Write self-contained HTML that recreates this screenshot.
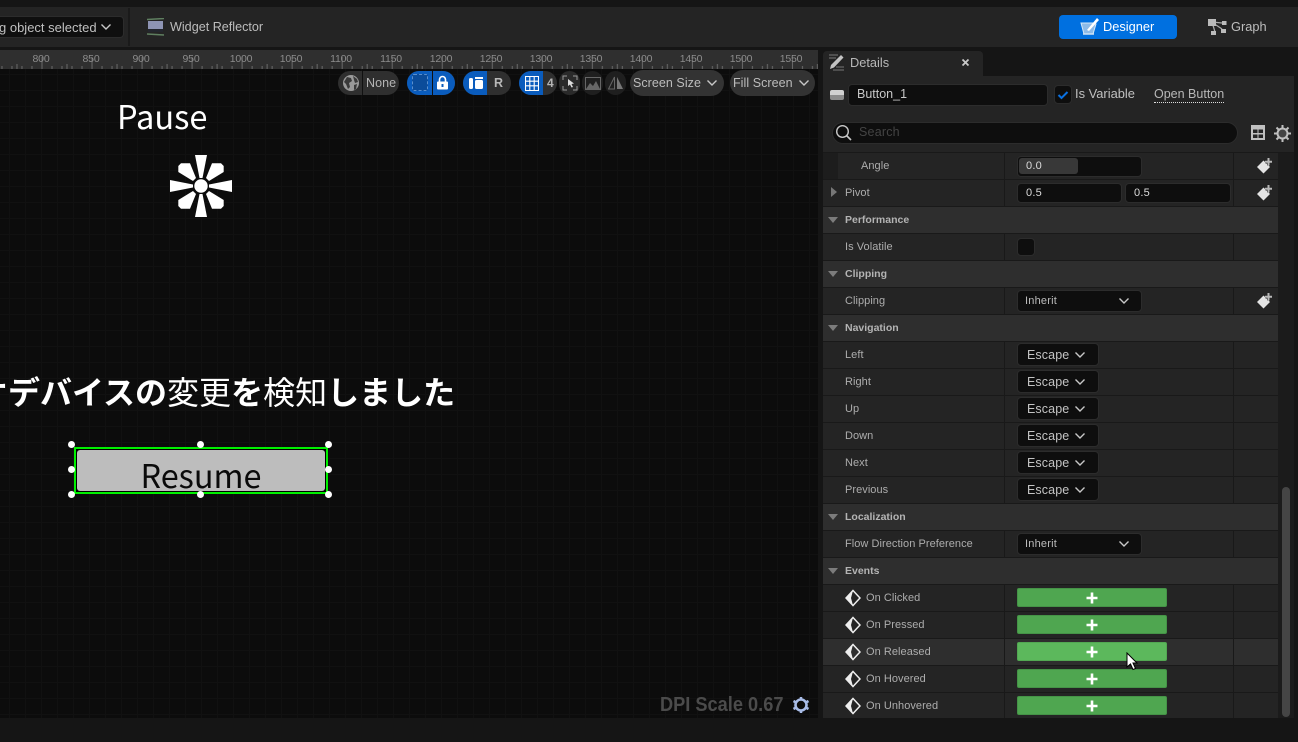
<!DOCTYPE html>
<html><head><meta charset="utf-8"><style>
*{box-sizing:border-box}
html,body{margin:0;padding:0;width:1298px;height:742px;overflow:hidden;background:#151515;font-family:"Liberation Sans","Noto Sans CJK JP",sans-serif;}
div,span,svg{position:absolute}
span.i{position:static}
.t{white-space:nowrap;line-height:1}
.row{left:823px;width:455px;height:27px;background:#242424;border-bottom:1px solid #191919}
.hd{background:#2e2e2e}
.hov{background:#2e2e2e}
.row .c1{left:181px;top:0;width:1px;height:26px;background:#191919}
.row .c2{left:410px;top:0;width:1px;height:26px;background:#191919}
.hd .c1,.hd .c2{display:none}
.lb{left:22px;top:8px;font-size:11px;color:#adadad;letter-spacing:.05px;white-space:nowrap;line-height:11px}
.hl{left:22px;top:7px;font-size:10.5px;font-weight:bold;color:#b4b4b4;white-space:nowrap;line-height:12px;top:7px}
.tri{left:5px;top:10px;width:0;height:0;border-left:5.5px solid transparent;border-right:5.5px solid transparent;border-top:6px solid #7c7c7c}
.inp{background:#0e0e0e;border:1px solid #2c2c2c;border-radius:4px}
.v{font-size:11px;color:#dcdcdc;line-height:11px;white-space:nowrap;letter-spacing:.2px}
.esc{left:194px;top:2px;width:82px;height:23px;background:#0e0e0e;border:1px solid #2c2c2c;border-radius:4px}
.esc .v{left:9px;top:5px;font-size:12.5px;line-height:13px;color:#c4c4c4;letter-spacing:.1px}
.esc svg{left:56px;top:7px}
.gb{left:194px;top:3px;width:150px;height:19px;background:#4fa650;border:1px solid #459347;border-radius:2px}
.gb svg{left:68px;top:3px}
.pill{background:#2f2f2f;top:71px;height:24px;border-radius:12px;overflow:hidden}
.blue{background:#0a5cbd;top:0;height:24px}
.pt{font-size:12.5px;color:#b4b4b4;line-height:13px;white-space:nowrap;letter-spacing:.05px}
.h{width:7px;height:7px;border-radius:50%;background:#fff}
.rl{font-size:10.5px;color:#8c8c8c;top:54px;line-height:10px;letter-spacing:-.2px;transform:translateX(-50%)}
</style></head><body>

<!-- top toolbar -->
<div style="left:0;top:7px;width:1298px;height:40px;background:#242424"></div>
<div style="left:-20px;top:16px;width:144px;height:22px;background:#0f0f0f;border:1px solid #2c2c2c;border-radius:4px"></div>
<div class="t" style="left:-1px;top:21px;font-size:13px;color:#c0c0c0">g object selected</div>
<svg style="left:100px;top:23px" width="12" height="8"><path d="M1.5 1.5L6 6l4.500-4.500" fill="none" stroke="#c8c8c8" stroke-width="1.400"/></svg>
<div style="left:128px;top:8px;width:2px;height:38px;background:#1a1a1a"></div>
<svg style="left:146px;top:18px" width="20" height="18"><path d="M1 1.500L18 0.500M1 16L18 17" stroke="#5f7f60" stroke-width="1.500"/><rect x="2" y="3" width="15" height="10" fill="#8e94b4"/><rect x="2" y="11" width="15" height="3" fill="#23262e"/></svg>
<div class="t" style="left:170px;top:21px;font-size:12.6px;color:#bdbdbd">Widget Reflector</div>

<div style="left:1059px;top:15px;width:118px;height:24px;background:#0070e0;border-radius:4px"></div>
<svg style="left:1079px;top:16px" width="21" height="21"><path d="M2 7h13l2 1-3 10H5z" fill="#8dbbe8" stroke="#d5e8f8" stroke-width="1"/><path d="M8 14L18 2l2 2L10 15z" fill="#fff"/><path d="M4 18h11" stroke="#cfe3f6" stroke-width="1.500"/></svg>
<div class="t" style="left:1103px;top:21px;font-size:12.8px;color:#fff">Designer</div>
<svg style="left:1208px;top:18px" width="19" height="18"><path d="M4 4l10 1M4 4l3 10M5 5l9 6" stroke="#aaa" stroke-width="1.300" fill="none"/><rect x="0" y="1" width="8" height="7" fill="#bbb"/><rect x="14" y="3" width="4.500" height="4" fill="#bbb"/><rect x="3" y="13" width="5" height="4" fill="#bbb"/><rect x="13" y="11" width="5" height="4" fill="#bbb"/></svg>
<div class="t" style="left:1231px;top:21px;font-size:12.8px;color:#bdbdbd">Graph</div>

<!-- ruler -->
<div style="left:0;top:50px;width:818px;height:19px;background:#2f2f2f"></div>
<svg style="left:0;top:50px" width="818" height="19">
<defs><pattern id="r" x="41.500" y="0" width="50.030" height="19" patternUnits="userSpaceOnUse">
<path d="M.5 7V19M10.500 16V19M20.500 16V19M25.500 14V19M30.500 16V19M40.500 16V19" stroke="#6a6a6a" stroke-width="1"/></pattern></defs>
<rect width="818" height="19" fill="url(#r)"/></svg>
<div class="t rl" style="left:41px">800</div><div class="t rl" style="left:91px">850</div><div class="t rl" style="left:141px">900</div><div class="t rl" style="left:191px">950</div><div class="t rl" style="left:241px">1000</div><div class="t rl" style="left:291px">1050</div><div class="t rl" style="left:341px">1100</div><div class="t rl" style="left:391px">1150</div><div class="t rl" style="left:441px">1200</div><div class="t rl" style="left:491px">1250</div><div class="t rl" style="left:541px">1300</div><div class="t rl" style="left:591px">1350</div><div class="t rl" style="left:641px">1400</div><div class="t rl" style="left:691px">1450</div><div class="t rl" style="left:741px">1500</div><div class="t rl" style="left:791px">1550</div>

<!-- canvas -->
<div style="left:0;top:69px;width:818px;height:649px;background-color:#0c0c0c;background-image:linear-gradient(to right,#111 1px,transparent 1px),linear-gradient(to bottom,#111 1px,transparent 1px);background-size:16px 16px;background-position:9px 5px"></div>

<!-- viewport toolbar -->
<div class="pill" style="left:338px;width:61px"><div style="left:24px;top:0;width:1px;height:24px;background:#111"></div><div class="pt" style="left:28px;top:6px">None</div></div>
<svg style="left:342px;top:74px" width="18" height="18"><circle cx="9" cy="9" r="8" fill="#9a9a9a"/><path d="M5 3l4 1 1 3-3 2 1 4-2 2-2-5-2-2zM11 2l4 3 1 3-3 1-1-3zM12 11l3-1-1 5-2 1z" fill="#3a3a3a"/></svg>
<div class="pill" style="left:407px;width:48px"><div class="blue" style="left:0;width:48px"></div><div style="left:25px;top:0;width:1px;height:24px;background:#111"></div></div>
<div style="left:412px;top:74px;width:16px;height:17px;background:#0b4c9a;border:1px dashed #5a8fcd;border-radius:2px"></div>
<svg style="left:436px;top:75px" width="13" height="15"><path d="M3.500 7V4.500a3 3 0 0 1 6 0V7" fill="none" stroke="#fff" stroke-width="1.600"/><rect x="1" y="6.500" width="11" height="8" rx="1" fill="#fff"/><rect x="5.500" y="9" width="2" height="3" fill="#0a5cbd"/></svg>
<div class="pill" style="left:463px;width:48px"><div class="blue" style="left:0;width:24px"></div></div>
<svg style="left:469px;top:77px" width="15" height="13"><rect x="0" y="1" width="4" height="11" rx="1.500" fill="#fff"/><rect x="6" y="3" width="8" height="9" rx="1.500" fill="#fff"/><rect x="6" y="0" width="8" height="2" fill="#fff"/></svg>
<div class="t" style="left:494px;top:77px;font-size:12.500px;font-weight:bold;color:#b8b8b8">R</div>
<div class="pill" style="left:519px;width:38px"><div class="blue" style="left:0;width:24px"></div><div class="pt" style="left:28px;top:6px;font-weight:bold;font-size:12px">4</div></div>
<svg style="left:525px;top:76px" width="14" height="15"><path d="M.5.5h13v14H.5zM.5 5.200h13M.5 9.800h13M4.800.5v14M9.200.5v14" fill="none" stroke="#fff" stroke-width="1.100"/></svg>
<div class="pill" style="left:559px;width:21px;background:#2a2a2a"></div>
<svg style="left:562px;top:75px" width="16" height="16"><path d="M1 5V1h4M11 1h4v4M15 11v4h-4M5 15H1v-4" fill="none" stroke="#999" stroke-width="1"/><path d="M6 4l6 4.500-2.500.5 1.500 3-1.500.5-1.500-3L6 11z" fill="#ddd"/></svg>
<div class="pill" style="left:582px;width:21px;background:#1f1f1f"></div>
<svg style="left:585px;top:77px" width="16" height="13"><rect x=".5" y=".5" width="15" height="12" fill="none" stroke="#666"/><path d="M1 12l4-6 3 3 3-5 4 8z" fill="#666"/></svg>
<div class="pill" style="left:605px;width:21px;background:#1f1f1f"></div>
<svg style="left:608px;top:76px" width="16" height="14"><path d="M6.500 1v12H.5z" fill="none" stroke="#666"/><path d="M9 1v12h6z" fill="#777"/></svg>
<div class="pill" style="left:630px;top:70px;width:94px;height:26px;border-radius:13px;background:#333"></div>
<div class="pt" style="left:633px;top:77px;color:#bcbcbc">Screen Size</div>
<svg style="left:706px;top:79px" width="12" height="8"><path d="M1.500 1.500L6 6l4.500-4.500" fill="none" stroke="#c8c8c8" stroke-width="1.400"/></svg>
<div class="pill" style="left:730px;top:70px;width:85px;height:26px;border-radius:13px;background:#333"></div>
<div class="pt" style="left:733px;top:77px;color:#bcbcbc">Fill Screen</div>
<svg style="left:798px;top:79px" width="12" height="8"><path d="M1.500 1.500L6 6l4.500-4.500" fill="none" stroke="#c8c8c8" stroke-width="1.400"/></svg>

<!-- canvas content -->
<div class="t" style="left:117px;top:95px;font-size:32.600px;line-height:42px;color:#fff;font-family:'Noto Sans CJK JP',sans-serif;font-weight:400">Pause</div>
<svg style="left:165px;top:150px" width="72" height="72"><g fill="#fff" transform="translate(36 36)"><circle r="6.700"/><path d="M-6-31H6L1.500-8H-1.500Z"/><path transform="rotate(90)" d="M-6-31H6L1.500-8H-1.500Z"/><path transform="rotate(180)" d="M-6-31H6L1.500-8H-1.500Z"/><path transform="rotate(270)" d="M-6-31H6L1.500-8H-1.500Z"/>
<path d="M-22.700-20L-20-22.700H-11L-5-8-8-5-22.700-14Z"/><path transform="scale(-1 1)" d="M-22.700-20L-20-22.700H-11L-5-8-8-5-22.700-14Z"/><path transform="scale(1 -1)" d="M-22.700-20L-20-22.700H-11L-5-8-8-5-22.700-14Z"/><path transform="scale(-1 -1)" d="M-22.700-20L-20-22.700H-11L-5-8-8-5-22.700-14Z"/></g></svg>
<div class="t" style="left:-24px;top:372px;font-size:32px;line-height:38px;color:#fff;font-weight:700;font-family:'Noto Sans CJK JP',sans-serif">オデバイスの<span class="i" style="font-weight:400">変更</span>を<span class="i" style="font-weight:400">検知</span>しました</div>

<div style="left:74px;top:447px;width:254px;height:47px;border:2px solid #00f000;background:#000"></div>
<div style="left:77px;top:450px;width:248px;height:41px;background:#bdbdbd;border-radius:3px;overflow:hidden"><div class="t" style="left:0;width:248px;text-align:center;top:3px;font-size:32.400px;line-height:44px;color:#0a0a0a;font-family:'Noto Sans CJK JP',sans-serif;font-weight:400">Resume</div></div>
<div class="h" style="left:68px;top:441px"></div><div class="h" style="left:197px;top:441px"></div><div class="h" style="left:325px;top:441px"></div>
<div class="h" style="left:68px;top:466px"></div><div class="h" style="left:325px;top:466px"></div>
<div class="h" style="left:68px;top:491px"></div><div class="h" style="left:197px;top:491px"></div><div class="h" style="left:325px;top:491px"></div>

<div class="t" style="left:660px;top:694px;font-size:20px;line-height:22px;font-weight:bold;color:#4b4b4b;transform:scaleX(.91);transform-origin:0 0">DPI Scale 0.67</div>
<svg style="left:792px;top:696px" width="18" height="18"><circle cx="9" cy="9" r="5.500" fill="none" stroke="#a9bde8" stroke-width="2.600"/><path d="M9 1v3M9 14v3M1.500 5l2.600 1.500M13.900 11.500l2.600 1.500M1.500 13l2.600-1.500M13.900 6.500L16.500 5" stroke="#a9bde8" stroke-width="2.500"/></svg>

<!-- details panel -->
<div style="left:823px;top:51px;width:160px;height:25px;background:#242424;border-radius:4px 4px 0 0"></div>
<div style="left:823px;top:76px;width:471px;height:642px;background:#242424"></div>
<div style="left:1278px;top:153px;width:16px;height:565px;background:#1b1b1b"></div>
<svg style="left:828px;top:54px" width="17" height="17"><path d="M1 1h9M1 4h7M8 13h8M5 16h11" stroke="#777" stroke-width="1"/><path d="M3 11L13 1l2.500 2.500L6 13.500 2 15z" fill="#c4c4c4"/></svg>
<div class="t" style="left:850px;top:57px;font-size:12.800px;color:#b8b8b8">Details</div>
<svg style="left:961px;top:58px" width="9" height="9"><path d="M1.500 1.500l6 6M7.500 1.500l-6 6" stroke="#c8c8c8" stroke-width="1.800"/></svg>

<div style="left:830px;top:90px;width:14px;height:10px;border-radius:2px;background:linear-gradient(to bottom,#d0d0d0 0,#d0d0d0 50%,#8c8c8c 50%)"></div>
<div class="inp" style="left:848px;top:84px;width:200px;height:22px"></div>
<div class="t" style="left:857px;top:88px;font-size:12.500px;color:#c8c8c8">Button_1</div>
<div class="inp" style="left:1054px;top:85px;width:18px;height:19px"></div>
<svg style="left:1057px;top:90px" width="12" height="10"><path d="M1.500 5l3 3 6-6" fill="none" stroke="#0a70e0" stroke-width="2"/></svg>
<div class="t" style="left:1075px;top:88px;font-size:12.900px;color:#c0c0c0">Is Variable</div>
<div class="t" style="left:1154px;top:88px;font-size:12.500px;color:#b8b8b8;border-bottom:1px dotted #ddd;padding-bottom:1px">Open Button</div>

<div style="left:832px;top:122px;width:406px;height:22px;background:#0e0e0e;border:1px solid #2c2c2c;border-radius:11px"></div>
<svg style="left:835px;top:124px" width="18" height="18"><circle cx="7.500" cy="7.500" r="5.800" fill="none" stroke="#c8c8c8" stroke-width="1.400"/><path d="M11.500 11.500L16 16" stroke="#c8c8c8" stroke-width="1.600"/></svg>
<div class="t" style="left:859px;top:126px;font-size:12.500px;color:#444;letter-spacing:.2px">Search</div>
<svg style="left:1251px;top:125px" width="14" height="15"><rect x="0" y="0" width="14" height="15" fill="#c0c0c0"/><path d="M2 4.500h4.500v3.500H2zM7.500 4.500H12v3.500H7.500zM2 9.500h4.500V13H2zM7.500 9.500H12V13H7.500z" fill="#242424"/></svg>
<svg style="left:1274px;top:125px" width="17" height="17"><circle cx="8.500" cy="8.500" r="5" fill="#444" stroke="#c0c0c0" stroke-width="2"/><path d="M8.500 0v3M8.500 14v3M0 8.500h3M14 8.500h3M2.500 2.500l2 2M12.500 12.500l2 2M2.500 14.500l2-2M12.500 4.500l2-2" stroke="#c0c0c0" stroke-width="2"/></svg>
<div style="left:823px;top:152px;width:471px;height:1px;background:#191919"></div>
<div style="left:1282px;top:487px;width:8px;height:230px;background:#454545;border-radius:4px"></div>

<!-- rows -->
<div class="row" style="top:153px"><div style="left:0;top:0;width:15px;height:26px;background:#1d1d1d"></div><div class="c1"></div><div class="c2"></div><div class="lb" style="left:38px">Angle</div>
<div class="inp" style="left:194px;top:3px;width:125px;height:21px"></div><div style="left:196px;top:5px;width:59px;height:16px;background:#383838;border-radius:3px"></div><div class="v" style="left:203px;top:8px">0.0</div></div>
<div class="row" style="top:180px"><div class="c1"></div><div class="c2"></div><div style="left:8px;top:7px;width:0;height:0;border-top:5px solid transparent;border-bottom:5px solid transparent;border-left:6px solid #777"></div><div class="lb">Pivot</div>
<div class="inp" style="left:194px;top:3px;width:105px;height:20px"></div><div class="v" style="left:203px;top:8px">0.5</div>
<div class="inp" style="left:302px;top:3px;width:106px;height:20px"></div><div class="v" style="left:311px;top:8px">0.5</div></div>
<div class="row hd" style="top:207px"><div class="tri"></div><div class="hl">Performance</div></div>
<div class="row" style="top:234px"><div class="c1"></div><div class="c2"></div><div class="lb">Is Volatile</div><div class="inp" style="left:194px;top:4px;width:18px;height:18px"></div></div>
<div class="row hd" style="top:261px"><div class="tri"></div><div class="hl">Clipping</div></div>
<div class="row" style="top:288px"><div class="c1"></div><div class="c2"></div><div class="lb">Clipping</div><div class="inp" style="left:194px;top:2px;width:125px;height:22px"></div><div class="v" style="left:202px;top:8px;color:#bcbcbc">Inherit</div>
<svg style="left:295px;top:9px" width="12" height="8"><path d="M1.500 1.500L6 6l4.500-4.500" fill="none" stroke="#c8c8c8" stroke-width="1.400"/></svg></div>
<div class="row hd" style="top:315px"><div class="tri"></div><div class="hl">Navigation</div></div>
<div class="row" style="top:342px"><div class="c1"></div><div class="c2"></div><div class="lb">Left</div><div class="esc" style="top:1px"><div class="v">Escape</div><svg width="12" height="8"><path d="M1.500 1.500L6 6l4.500-4.500" fill="none" stroke="#c8c8c8" stroke-width="1.400"/></svg></div></div>
<div class="row" style="top:369px"><div class="c1"></div><div class="c2"></div><div class="lb">Right</div><div class="esc" style="top:1px"><div class="v">Escape</div><svg width="12" height="8"><path d="M1.500 1.500L6 6l4.500-4.500" fill="none" stroke="#c8c8c8" stroke-width="1.400"/></svg></div></div>
<div class="row" style="top:396px"><div class="c1"></div><div class="c2"></div><div class="lb">Up</div><div class="esc" style="top:1px"><div class="v">Escape</div><svg width="12" height="8"><path d="M1.500 1.500L6 6l4.500-4.500" fill="none" stroke="#c8c8c8" stroke-width="1.400"/></svg></div></div>
<div class="row" style="top:423px"><div class="c1"></div><div class="c2"></div><div class="lb">Down</div><div class="esc" style="top:1px"><div class="v">Escape</div><svg width="12" height="8"><path d="M1.500 1.500L6 6l4.500-4.500" fill="none" stroke="#c8c8c8" stroke-width="1.400"/></svg></div></div>
<div class="row" style="top:450px"><div class="c1"></div><div class="c2"></div><div class="lb">Next</div><div class="esc" style="top:1px"><div class="v">Escape</div><svg width="12" height="8"><path d="M1.500 1.500L6 6l4.500-4.500" fill="none" stroke="#c8c8c8" stroke-width="1.400"/></svg></div></div>
<div class="row" style="top:477px"><div class="c1"></div><div class="c2"></div><div class="lb">Previous</div><div class="esc" style="top:1px"><div class="v">Escape</div><svg width="12" height="8"><path d="M1.500 1.500L6 6l4.500-4.500" fill="none" stroke="#c8c8c8" stroke-width="1.400"/></svg></div></div>
<div class="row hd" style="top:504px"><div class="tri"></div><div class="hl">Localization</div></div>
<div class="row" style="top:531px"><div class="c1"></div><div class="c2"></div><div class="lb">Flow Direction Preference</div><div class="inp" style="left:194px;top:2px;width:125px;height:22px"></div><div class="v" style="left:202px;top:8px;color:#bcbcbc">Inherit</div>
<svg style="left:295px;top:9px" width="12" height="8"><path d="M1.500 1.500L6 6l4.500-4.500" fill="none" stroke="#c8c8c8" stroke-width="1.400"/></svg></div>
<div class="row hd" style="top:558px"><div class="tri"></div><div class="hl">Events</div></div>

<div class="row" style="top:585px"><div class="c1"></div><div class="c2"></div><svg style="left:22px;top:4px" width="16" height="18"><path d="M8 1.500L15 9l-7 7.500L1 9z" fill="none" stroke="#eee" stroke-width="1.500"/><path d="M8 1.500L1 9l7 7.500L6 9z" fill="#eee"/></svg><div class="lb" style="left:43px">On Clicked</div><div class="gb"><svg width="12" height="12"><path d="M6 .5v11M.5 6h11" stroke="#fff" stroke-width="2.600"/></svg></div></div>
<div class="row" style="top:612px"><div class="c1"></div><div class="c2"></div><svg style="left:22px;top:4px" width="16" height="18"><path d="M8 1.500L15 9l-7 7.500L1 9z" fill="none" stroke="#eee" stroke-width="1.500"/><path d="M8 1.500L1 9l7 7.500L6 9z" fill="#eee"/></svg><div class="lb" style="left:43px">On Pressed</div><div class="gb"><svg width="12" height="12"><path d="M6 .5v11M.5 6h11" stroke="#fff" stroke-width="2.600"/></svg></div></div>
<div class="row hov" style="top:639px"><div class="c1"></div><div class="c2"></div><svg style="left:22px;top:4px" width="16" height="18"><path d="M8 1.500L15 9l-7 7.500L1 9z" fill="none" stroke="#eee" stroke-width="1.500"/><path d="M8 1.500L1 9l7 7.500L6 9z" fill="#eee"/></svg><div class="lb" style="left:43px">On Released</div><div class="gb" style="background:#5cb85c;border-color:#52a852"><svg width="12" height="12"><path d="M6 .5v11M.5 6h11" stroke="#fff" stroke-width="2.600"/></svg></div></div>
<div class="row" style="top:666px"><div class="c1"></div><div class="c2"></div><svg style="left:22px;top:4px" width="16" height="18"><path d="M8 1.500L15 9l-7 7.500L1 9z" fill="none" stroke="#eee" stroke-width="1.500"/><path d="M8 1.500L1 9l7 7.500L6 9z" fill="#eee"/></svg><div class="lb" style="left:43px">On Hovered</div><div class="gb"><svg width="12" height="12"><path d="M6 .5v11M.5 6h11" stroke="#fff" stroke-width="2.600"/></svg></div></div>
<div class="row" style="top:693px;height:25px;border:0"><div class="c1" style="height:25px"></div><div class="c2" style="height:25px"></div><svg style="left:22px;top:4px" width="16" height="18"><path d="M8 1.500L15 9l-7 7.500L1 9z" fill="none" stroke="#eee" stroke-width="1.500"/><path d="M8 1.500L1 9l7 7.500L6 9z" fill="#eee"/></svg><div class="lb" style="left:43px">On Unhovered</div><div class="gb"><svg width="12" height="12"><path d="M6 .5v11M.5 6h11" stroke="#fff" stroke-width="2.600"/></svg></div></div>

<!-- key icons -->
<svg style="left:1257px;top:157px" width="16" height="17"><path d="M6.500 3.500L13 10l-6.500 6.500L0 10z" fill="#e4e4e4"/><path d="M11.500 1v7.500M8 4.700h7" stroke="#242424" stroke-width="3"/><path d="M11.500 1v7.500M8 4.700h7" stroke="#b8b8b8" stroke-width="2"/></svg>
<svg style="left:1257px;top:184px" width="16" height="17"><path d="M6.500 3.500L13 10l-6.500 6.500L0 10z" fill="#e4e4e4"/><path d="M11.500 1v7.500M8 4.700h7" stroke="#242424" stroke-width="3"/><path d="M11.500 1v7.500M8 4.700h7" stroke="#b8b8b8" stroke-width="2"/></svg>
<svg style="left:1257px;top:292px" width="16" height="17"><path d="M6.500 3.500L13 10l-6.500 6.500L0 10z" fill="#e4e4e4"/><path d="M11.500 1v7.500M8 4.700h7" stroke="#242424" stroke-width="3"/><path d="M11.500 1v7.500M8 4.700h7" stroke="#b8b8b8" stroke-width="2"/></svg>

<!-- cursor -->
<svg style="left:1126px;top:652px" width="13" height="20"><path d="M1 1v14l3.500-3 2.500 5.500 2.500-1-2.500-5.500H11z" fill="#fff" stroke="#000" stroke-width="1"/></svg>
</body></html>
